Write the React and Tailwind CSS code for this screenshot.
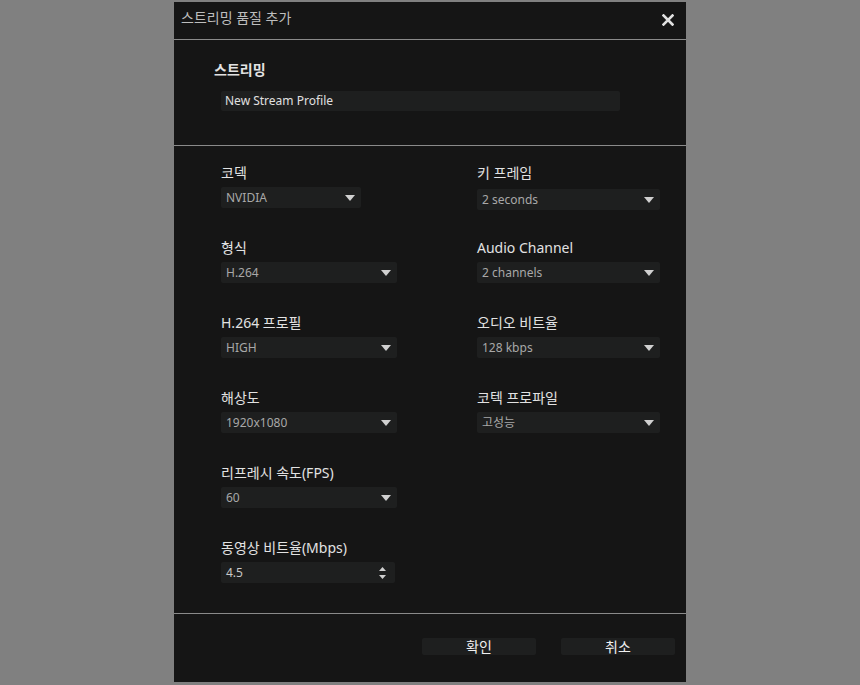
import React from "react";

const font = { fontFamily: '"Noto Sans", "Noto Sans CJK KR", sans-serif' };

function Arrow() {
  return (
    <svg width="10" height="6" viewBox="0 0 10 6" className="shrink-0">
      <path d="M0 0 L10 0 L5 6 Z" fill="#d0d0d0" />
    </svg>
  );
}

function Select({ value, width, mt = "mt-[5px]" }) {
  return (
    <div
      className={`${mt} flex h-[21px] items-center justify-between rounded-[2px] bg-[#1e1f1f] pl-[5px] pr-[6px] text-[12px] text-[#a8a8a8]`}
      style={{ width }}
    >
      <span className="leading-none">{value}</span>
      <Arrow />
    </div>
  );
}

function Stepper({ value }) {
  return (
    <div className="mt-[5px] flex h-[21px] w-[174px] items-center justify-between rounded-[2px] bg-[#1e1f1f] pl-[5px] pr-[9px] text-[12px] text-[#c8c8c8]">
      <span className="leading-none">{value}</span>
      <div className="flex flex-col gap-[4px]">
        <svg width="7" height="4" viewBox="0 0 7 4">
          <path d="M0 4 L7 4 L3.5 0 Z" fill="#d0d0d0" />
        </svg>
        <svg width="7" height="4" viewBox="0 0 7 4">
          <path d="M0 0 L7 0 L3.5 4 Z" fill="#d0d0d0" />
        </svg>
      </div>
    </div>
  );
}

function Field({ label, children }) {
  return (
    <div className="h-[75px]">
      <div className="h-[18px] text-[14px] leading-[18px] text-[#e2e2e2]">{label}</div>
      {children}
    </div>
  );
}

export default function App() {
  return (
    <div className="flex h-[685px] w-full justify-center bg-[#808080]" style={font}>
      <div className="mt-[2px] flex h-[680px] w-[512px] flex-col bg-[#151515]">
        <div className="flex h-[38px] items-center justify-between border-b border-[#8a8a8a] pb-[6px] pl-[7px] pr-[12px]">
          <span className="text-[14px] text-[#bdbdbd]">스트리밍 품질 추가</span>
          <svg width="12" height="12" viewBox="0 0 12 12" className="mt-[4px]">
            <path d="M1.5 1.5 L10.5 10.5 M10.5 1.5 L1.5 10.5" stroke="#e0e0e0" strokeWidth="2.6" strokeLinecap="square" />
          </svg>
        </div>
        <div className="h-[106px] border-b border-[#8a8a8a] pt-[21px]">
          <div className="pl-[40px] text-[14px] font-bold leading-[18px] text-[#e2e2e2]">스트리밍</div>
          <div className="ml-[47px] mt-[12px] flex h-[20px] w-[399px] items-center rounded-[2px] bg-[#1e1f1f] pl-[4px] text-[12px] text-[#e0e0e0]">
            New Stream Profile
          </div>
        </div>
        <div className="flex h-[468px] border-b border-[#8a8a8a] pl-[47px] pt-[18px]">
          <div className="w-[256px]">
            <Field label="코덱"><Select value="NVIDIA" width={140} /></Field>
            <Field label="형식"><Select value="H.264" width={176} /></Field>
            <Field label="H.264 프로필"><Select value="HIGH" width={176} /></Field>
            <Field label="해상도"><Select value="1920x1080" width={176} /></Field>
            <Field label="리프레시 속도(FPS)"><Select value="60" width={176} /></Field>
            <Field label="동영상 비트율(Mbps)"><Stepper value="4.5" /></Field>
          </div>
          <div>
            <Field label="키 프레임"><Select value="2 seconds" width={183} mt="mt-[7px]" /></Field>
            <Field label="Audio Channel"><Select value="2 channels" width={183} /></Field>
            <Field label="오디오 비트율"><Select value="128 kbps" width={183} /></Field>
            <Field label="코텍 프로파일"><Select value="고성능" width={183} /></Field>
          </div>
        </div>
        <div className="flex flex-1 justify-end gap-[25px] pr-[11px] pt-[24px]">
          <button className="flex h-[17px] w-[114px] items-center justify-center rounded-[2px] bg-[#1e1f1f] text-[14px] text-[#f0f0f0]">확인</button>
          <button className="flex h-[17px] w-[114px] items-center justify-center rounded-[2px] bg-[#1e1f1f] text-[14px] text-[#f0f0f0]">취소</button>
        </div>
      </div>
    </div>
  );
}
